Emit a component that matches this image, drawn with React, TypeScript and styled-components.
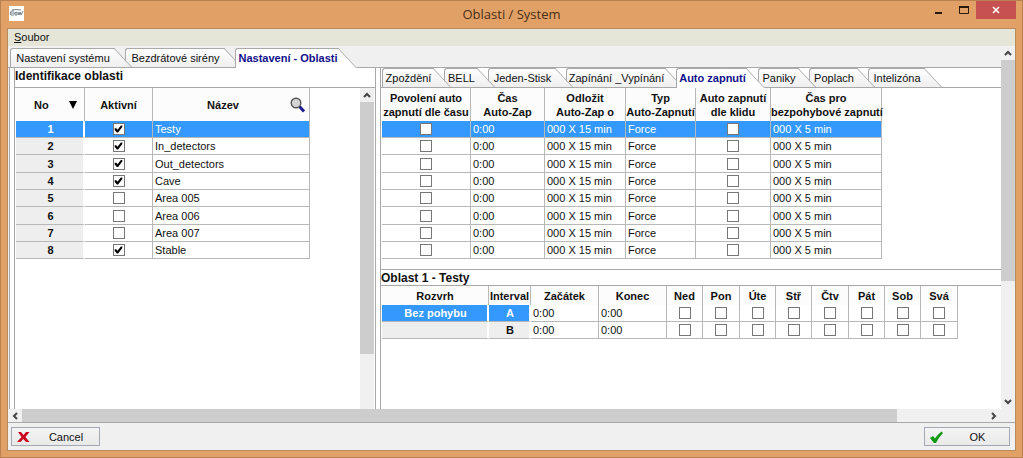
import React, { useState } from "react";
import styled, { createGlobalStyle, css } from "styled-components";

const LINE = "#a8a8a8";
const GRID = "#b8b8b8";
const SELECTED = "#3399ff";

const Global = createGlobalStyle`
  *, *::before, *::after { box-sizing: border-box; }
  body {
    margin: 0;
    background: #e0a066;
    color: #111;
    font: 11px/14px "Liberation Sans", Arial, sans-serif;
  }
  button, input { font: inherit; color: inherit; margin: 0; }
  h1, h2 { margin: 0; }
`;

/* ---------- window frame ---------- */

const Frame = styled.div`
  display: flex;
  flex-direction: column;
  min-height: 100vh;
  padding: 0 6px 6px;
  background: #e0a066;
  border: 1px solid #b98050;
`;

const TitleBar = styled.header`
  display: grid;
  grid-template-columns: 120px 1fr 120px;
  height: 27px;
`;

const Logo = styled.svg`
  width: 15px;
  height: 15px;
  margin: 5px 0 0 2px;
  background: #fff;
`;

const Title = styled.h1`
  font: 13px/27px "Open Sans", "Noto Sans", sans-serif;
  text-align: center;
  color: #4a2f18;
`;

const Controls = styled.div`
  display: flex;
  justify-content: flex-end;
  align-items: flex-start;
`;

const ControlButton = styled.button<{ $close?: boolean }>`
  display: flex;
  align-items: center;
  justify-content: center;
  width: ${(p) => (p.$close ? 40 : 25)}px;
  height: 18px;
  padding: 0;
  border: 0;
  background: ${(p) => (p.$close ? "#c75050" : "transparent")};
`;

const Client = styled.div`
  display: flex;
  flex: 1;
  flex-direction: column;
  border: 1px solid #b98a5c;
  background: #f0f0f0;
`;

const MenuBar = styled.nav`
  height: 17px;
  background: #e6e6d8;
`;

const MenuButton = styled.button`
  padding: 0 6px;
  border: 0;
  background: none;
  line-height: 17px;
`;

/* ---------- scroll bars ---------- */

const Bar = styled.div<{ $vertical?: boolean }>`
  display: flex;
  flex-direction: ${(p) => (p.$vertical ? "column" : "row")};
  background: #f0f0f0;
  ${(p) => (p.$vertical ? "width: 14px;" : "height: 13px;")}
  flex: none;
`;

const Arrow = styled.button`
  display: flex;
  flex: none;
  align-items: center;
  justify-content: center;
  width: 14px;
  height: 14px;
  padding: 0;
  border: 0;
  background: none;
`;

const Track = styled.div<{ $vertical?: boolean }>`
  display: flex;
  flex: 1;
  flex-direction: ${(p) => (p.$vertical ? "column" : "row")};
`;

const Thumb = styled.div<{ $size: number }>`
  flex: 0 0 ${(p) => p.$size}%;
  background: #cdcdcd;
`;

const CHEVRONS = {
  up: "M1 6 L4 3 L7 6",
  down: "M1 2 L4 5 L7 2",
  left: "M6 1 L3 4 L6 7",
  right: "M2 1 L5 4 L2 7",
};

function ScrollArrow({ dir }: { dir: keyof typeof CHEVRONS }) {
  return (
    <Arrow aria-label={`Scroll ${dir}`}>
      <svg width="8" height="8" viewBox="0 0 8 8">
        <path d={CHEVRONS[dir]} fill="none" stroke="#444" strokeWidth="2" />
      </svg>
    </Arrow>
  );
}

/* ---------- tabs ---------- */

const TabRow = styled.div<{ $inner?: boolean }>`
  display: flex;
  align-items: flex-end;
  height: ${(p) => (p.$inner ? 20 : 22)}px;
  padding-left: ${(p) => (p.$inner ? 1 : 2)}px;
  background: ${(p) => (p.$inner ? "#fff" : "#f0f0f0")};
  border-bottom: 1px solid ${LINE};
  isolation: isolate;
`;

const Tab = styled.button<{ $width: number; $order: number; $active: boolean }>`
  position: relative;
  z-index: ${(p) => (p.$active ? 20 : p.$order)};
  isolation: isolate;
  flex: none;
  width: ${(p) => p.$width}px;
  height: 19px;
  margin-right: -7px;
  padding: 1px 18px 0 2px;
  border: 0;
  background: none;
  text-align: center;
  white-space: nowrap;
  ${(p) =>
    p.$active &&
    css`
      height: 20px;
      margin-bottom: -1px;
      padding-bottom: 1px;
      font-weight: bold;
      color: #10108a;
    `}

  &::before,
  &::after {
    content: "";
    position: absolute;
    z-index: -1;
    top: 0;
    bottom: 0;
    border-top: 1px solid ${LINE};
    background: ${(p) => (p.$active ? "#fff" : "linear-gradient(#fefefe, #efefef)")};
  }
  &::before {
    left: 0;
    right: 20px;
    border-left: 1px solid ${LINE};
    border-top-left-radius: 3px;
  }
  &::after {
    right: 0;
    width: 24px;
    border-right: 1px solid ${LINE};
    transform: skewX(43deg);
    transform-origin: bottom right;
  }
`;

type TabDef = [label: string, width: number];

function Tabs({ tabs, initial, inner }: { tabs: TabDef[]; initial: number; inner?: boolean }) {
  const [active, setActive] = useState(initial);
  return (
    <TabRow role="tablist" $inner={inner}>
      {tabs.map(([label, width], i) => (
        <Tab
          key={label}
          role="tab"
          aria-selected={i === active}
          $active={i === active}
          $order={tabs.length - i}
          $width={width}
          onClick={() => setActive(i)}
        >
          {label}
        </Tab>
      ))}
    </TabRow>
  );
}

/* ---------- panels ---------- */

const Body = styled.div`
  display: flex;
  flex: 1;
`;

const Main = styled.main`
  display: flex;
  flex: 1;
  flex-direction: column;
  min-width: 0;
`;

const Split = styled.div`
  display: flex;
  flex: 1;
  margin-left: 1px;
  border-left: 1px solid ${LINE};
  background: #fff;
`;

const LeftPane = styled.section`
  display: flex;
  flex: none;
  flex-direction: column;
  width: 362px;
  margin-left: 4px;
  border: solid ${LINE};
  border-width: 0 1px;
`;

const RightPane = styled.section`
  flex: 1;
  min-width: 0;
  margin-left: 4px;
  margin-top: -1px;
  border-left: 1px solid ${LINE};
  border-top: 1px solid ${LINE};
  overflow: hidden;
`;

const Caption = styled.h2`
  height: 20px;
  border-bottom: 1px solid ${LINE};
  font-size: 12px;
  line-height: 16px;
`;

const LowerCaption = styled(Caption)`
  height: 16px;
`;

const Scroller = styled.div`
  display: flex;
  flex: 1;
  justify-content: space-between;
  padding-right: 1px;
`;

const UpperArea = styled.div`
  height: 182px;
  border-bottom: 1px solid ${LINE};
`;

/* ---------- tables ---------- */

const Table = styled.table`
  table-layout: fixed;
  border-collapse: separate;
  border-spacing: 0;
  width: 1px;
  margin-left: 1px;
  align-self: flex-start;
`;

const Head = styled.th<{ $short?: boolean }>`
  height: ${(p) => (p.$short ? 19 : 33)}px;
  padding: 0;
  border-right: 1px solid ${GRID};
  background: #fcfcfc;
  line-height: 14px;
  white-space: nowrap;
`;

const HeadContent = styled.span<{ $search?: boolean }>`
  display: flex;
  align-items: center;
  padding: ${(p) => (p.$search ? "0 3px" : "0 7px 0 18px")};
  justify-content: space-between;
`;

const Row = styled.tr<{ $selected?: boolean }>`
  height: 17px;
  &:nth-child(3n) { height: 18px; }
  ${(p) => p.$selected && css`
    & > * { background: ${SELECTED}; color: #fff; }
  `}
`;

const cell = css`
  padding: 0 0 0 2px;
  border-right: 1px solid ${GRID};
  border-bottom: 1px solid ${GRID};
  line-height: 14px;
  white-space: nowrap;
`;

const Cell = styled.td`
  ${cell}
`;

const CheckCell = styled.td`
  ${cell}
  padding: 0;
  text-align: center;
`;

const RowHead = styled.th<{ $selected?: boolean }>`
  ${cell}
  border-right: 2px solid #fff;
  background: ${(p) => (p.$selected ? SELECTED : "#eee")};
  color: ${(p) => (p.$selected ? "#fff" : "inherit")};
`;

const Check = styled.input.attrs({ type: "checkbox" })`
  appearance: none;
  display: block;
  width: 12px;
  height: 12px;
  margin: 0 auto;
  border: 1px solid #777;
  background: #fff;
  &:checked::before {
    content: "";
    display: block;
    height: 10px;
    background: #000;
    clip-path: polygon(12% 42%, 28% 42%, 40% 58%, 74% 16%, 88% 16%, 88% 30%, 46% 84%, 34% 84%, 12% 60%);
  }
`;

function Cols({ widths }: { widths: number[] }) {
  return (
    <colgroup>
      {widths.map((w, i) => (
        <col key={i} width={w} />
      ))}
    </colgroup>
  );
}

const AREAS: [string, boolean][] = [
  ["Testy", true],
  ["In_detectors", true],
  ["Out_detectors", true],
  ["Cave", true],
  ["Area 005", false],
  ["Area 006", false],
  ["Area 007", false],
  ["Stable", true],
];

const DAYS = ["Ned", "Pon", "Úte", "Stř", "Čtv", "Pát", "Sob", "Svá"];

function AreaTable() {
  return (
    <Table>
      <Cols widths={[69, 68, 157]} />
      <thead>
        <tr>
          <Head>
            <HeadContent>
              No
              <svg width="8" height="8" viewBox="0 0 8 8">
                <path d="M0 0H8L4 8Z" fill="#000" />
              </svg>
            </HeadContent>
          </Head>
          <Head>Aktivní</Head>
          <Head>
            <HeadContent $search>
              <span />
              Název
              <svg width="16" height="16" viewBox="0 0 16 16">
                <path d="M9.500 9.500L14 14.500" stroke="#1c1c8c" strokeWidth="3" />
                <circle cx="6" cy="6" r="4.800" fill="#d4d4d4" stroke="#555" strokeWidth="1.400" />
              </svg>
            </HeadContent>
          </Head>
        </tr>
      </thead>
      <tbody>
        {AREAS.map(([name, on], i) => (
          <Row key={name} $selected={i === 0}>
            <RowHead scope="row" $selected={i === 0}>{i + 1}</RowHead>
            <CheckCell>
              <Check defaultChecked={on} aria-label={`Aktivní ${name}`} />
            </CheckCell>
            <Cell>{name}</Cell>
          </Row>
        ))}
      </tbody>
    </Table>
  );
}

function AutoTable() {
  return (
    <Table>
      <Cols widths={[89, 74, 81, 70, 75, 111]} />
      <thead>
        <tr>
          <Head>Povolení auto<br />zapnutí dle času</Head>
          <Head>Čas<br />Auto-Zap</Head>
          <Head>Odložit<br />Auto-Zap o</Head>
          <Head>Typ<br />Auto-Zapnutí</Head>
          <Head>Auto zapnutí<br />dle klidu</Head>
          <Head>Čas pro<br />bezpohybové zapnutí</Head>
        </tr>
      </thead>
      <tbody>
        {AREAS.map(([name], i) => (
          <Row key={name} $selected={i === 0}>
            <CheckCell><Check aria-label={`Povolení auto zapnutí dle času ${name}`} /></CheckCell>
            <Cell>0:00</Cell>
            <Cell>000 X 15 min</Cell>
            <Cell>Force</Cell>
            <CheckCell><Check aria-label={`Auto zapnutí dle klidu ${name}`} /></CheckCell>
            <Cell>000 X 5 min</Cell>
          </Row>
        ))}
      </tbody>
    </Table>
  );
}

function ScheduleTable() {
  return (
    <Table>
      <Cols widths={[107, 42, 68, 68, 36, 37, 36, 36, 37, 36, 36, 37]} />
      <thead>
        <tr>
          {["Rozvrh", "Interval", "Začátek", "Konec", ...DAYS].map((t) => (
            <Head key={t} $short>{t}</Head>
          ))}
        </tr>
      </thead>
      <tbody>
        {["A", "B"].map((id, i) => (
          <Row key={id}>
            <RowHead $selected={i === 0}>{i === 0 ? "Bez pohybu" : ""}</RowHead>
            <RowHead scope="row" $selected={i === 0}>{id}</RowHead>
            <Cell>0:00</Cell>
            <Cell>0:00</Cell>
            {DAYS.map((d) => (
              <CheckCell key={d}><Check aria-label={`${d} ${id}`} /></CheckCell>
            ))}
          </Row>
        ))}
      </tbody>
    </Table>
  );
}

/* ---------- footer ---------- */

const Footer = styled.footer`
  display: flex;
  justify-content: space-between;
  height: 28px;
  padding: 4px 5px 4px 3px;
  border-top: 1px solid ${LINE};
`;

const ActionButton = styled.button<{ $width: number }>`
  display: grid;
  grid-template-columns: 20px 1fr;
  align-items: center;
  width: ${(p) => p.$width}px;
  height: 19px;
  padding: 0 4px 0 5px;
  border: 1px solid #a4a8b4;
  background: linear-gradient(#f4f4f4, #e9e9e9);
`;

export default function App() {
  return (
    <Frame>
      <Global />
      <TitleBar>
        <Logo viewBox="0 0 15 15">
          <path
            d="M5 5Q2 4 1 7Q1 10 5 9M2 7H6M6 9Q5 6 8 6V9H6M9 6L10 9L11 6L12 9L14 5M3 4Q7 3 12 4"
            fill="none"
            stroke="#76808a"
          />
        </Logo>
        <Title>Oblasti / System</Title>
        <Controls>
          <ControlButton aria-label="Minimize">
            <svg width="8" height="10" viewBox="0 0 8 10"><path d="M0 8H7" stroke="#2b1a0c" strokeWidth="2" /></svg>
          </ControlButton>
          <ControlButton aria-label="Maximize">
            <svg width="10" height="8" viewBox="0 0 10 8">
              <path d="M.5 1V7.500H9.500V1" fill="none" stroke="#2b1a0c" />
              <path d="M0 1H10" stroke="#2b1a0c" strokeWidth="2" />
            </svg>
          </ControlButton>
          <ControlButton aria-label="Close" $close>
            <svg width="8" height="8" viewBox="0 0 8 8"><path d="M1 1L7 7M7 1L1 7" stroke="#fff" strokeWidth="1.600" /></svg>
          </ControlButton>
        </Controls>
      </TitleBar>
      <Client>
        <MenuBar>
          <MenuButton><u>S</u>oubor</MenuButton>
        </MenuBar>
        <Body>
          <Main>
            <Tabs
              tabs={[["Nastavení systému", 122], ["Bezdrátové sirény", 117], ["Nastavení - Oblasti", 122]]}
              initial={2}
            />
            <Split>
              <LeftPane>
                <Caption>Identifikace oblasti</Caption>
                <Scroller>
                  <AreaTable />
                  <Bar $vertical>
                    <ScrollArrow dir="up" />
                    <Track $vertical><Thumb $size={82} /></Track>
                  </Bar>
                </Scroller>
              </LeftPane>
              <RightPane>
                <Tabs
                  inner
                  tabs={[
                    ["Zpoždění", 69],
                    ["BELL", 51],
                    ["Jeden-Stisk", 85],
                    ["Zapínání _Vypínání", 117],
                    ["Auto zapnutí", 89],
                    ["Paniky", 58],
                    ["Poplach", 66],
                    ["Intelizóna", 74],
                  ]}
                  initial={4}
                />
                <UpperArea><AutoTable /></UpperArea>
                <LowerCaption>Oblast 1 - Testy</LowerCaption>
                <ScheduleTable />
              </RightPane>
            </Split>
          </Main>
          <Bar $vertical>
            <ScrollArrow dir="up" />
            <Track $vertical><Thumb $size={66} /></Track>
            <ScrollArrow dir="down" />
          </Bar>
        </Body>
        <Bar>
          <ScrollArrow dir="left" />
          <Track><Thumb $size={90.7} /></Track>
          <ScrollArrow dir="right" />
          <Arrow as="span" />
        </Bar>
        <Footer>
          <ActionButton $width={89}>
            <svg width="13" height="12" viewBox="0 0 13 12">
              <path d="M1 1H4L6.500 4L9 1H12.500L8.500 6L12.500 11H9L6.300 8L3.500 11H0L4.500 6Z" fill="#cc0a1e" />
            </svg>
            <span>Cancel</span>
          </ActionButton>
          <ActionButton $width={86}>
            <svg width="13" height="12" viewBox="0 0 13 12">
              <path d="M0 7L3 5L5 7.500Q8 3 11.500 .5L13 2Q9 6 6 12H4Z" fill="#109a10" />
            </svg>
            <span>OK</span>
          </ActionButton>
        </Footer>
      </Client>
    </Frame>
  );
}
